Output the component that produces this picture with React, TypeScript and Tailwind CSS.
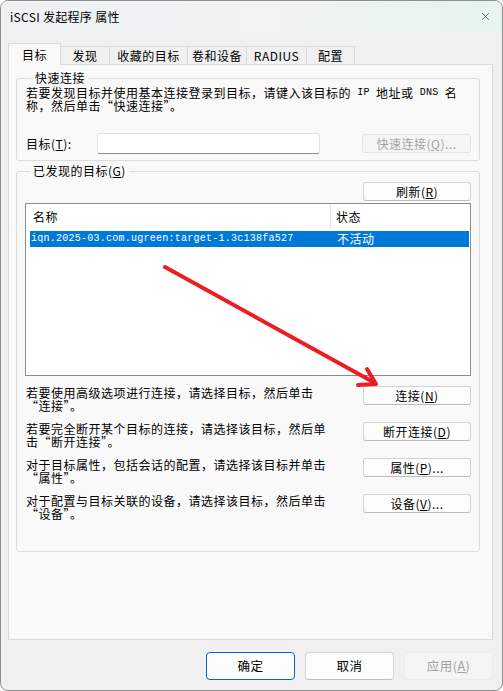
import React from 'react';
import { X } from 'lucide-react';

const mono = "font-['Liberation_Mono',monospace]";

const tabs = [
  { label: '发现', w: 'w-[49px]' },
  { label: '收藏的目标', w: 'w-[78px]' },
  { label: '卷和设备', w: 'w-[59px]' },
  { label: 'RADIUS', w: 'w-[60px]' },
  { label: '配置', w: 'w-[48px]' },
];

const Btn: React.FC<{ children: React.ReactNode; disabled?: boolean }> = ({ children, disabled }) => (
  <div
    className={
      disabled
        ? 'w-[109px] h-[19px] shrink-0 flex items-center justify-center rounded-[3px] border border-[#e4e4e4] bg-[#f5f5f5] text-[#a3a3a3] leading-none'
        : 'w-[108px] h-[19px] shrink-0 flex items-center justify-center rounded-[3px] border border-[#d3d3d3] border-b-[#bdbdbd] bg-[#fdfdfd] text-black leading-none'
    }
  >
    {children}
  </div>
);

const actions = [
  { l1: '若要使用高级选项进行连接，请选择目标，然后单击', l2: '“连接”。', btn: <>连接(<u>N</u>)</> },
  { l1: '若要完全断开某个目标的连接，请选择该目标，然后单', l2: '击“断开连接”。', btn: <>断开连接(<u>D</u>)</> },
  { l1: '对于目标属性，包括会话的配置，请选择该目标并单击', l2: '“属性”。', btn: <>属性(<u>P</u>)...</> },
  { l1: '对于配置与目标关联的设备，请选择该目标，然后单击', l2: '“设备”。', btn: <>设备(<u>V</u>)...</> },
];

const App: React.FC = () => {
  return (
    <div className="relative w-[503px] h-[691px] overflow-hidden rounded-[8px] border border-[#8f8f8f] bg-[#f0f0f0] font-['Noto_Sans_CJK_SC',sans-serif] text-[12px] tracking-[0.5px] text-black">
      {/* title bar */}
      <div className="h-[31px] flex items-center justify-between pl-[9px] pr-[10px] bg-linear-to-r from-[#eff1f3] via-[#f1f4f3] to-[#e6f3ee]">
        <span className="tracking-[0.3px]">iSCSI 发起程序 属性</span>
        <X size={13} strokeWidth={1.1} className="text-[#222]" />
      </div>

      <div className="pt-[11px] pl-[7px] pr-[9px]">
        {/* tabs */}
        <div className="flex items-end">
          <div className="relative z-10 -mb-px h-[22px] w-[53px] flex items-center justify-center border border-b-0 border-[#d9d9d9] bg-[#f9f9f9]">
            目标
          </div>
          {tabs.map((t) => (
            <div
              key={t.label}
              className={`${t.w} h-[18px] flex items-center justify-center border-t border-r border-[#d9d9d9] bg-[#f0f0f0]`}
            >
              {t.label}
            </div>
          ))}
        </div>

        {/* panel */}
        <div className="h-[576px] border border-[#d9d9d9] bg-[#f9f9f9] pt-[6px] flex flex-col">
          <fieldset className="ml-[7px] mr-[12px] rounded-[3px] border border-[#dcdcdc] pl-[9px] pr-[8px] pb-[6px]">
            <legend className="ml-[6px] px-[3px] h-[14px] leading-[14px]">快速连接</legend>
            <div className="pt-[1px] whitespace-nowrap">
              <div className="h-[13px] leading-[13px] flex items-center">
                若要发现目标并使用基本连接登录到目标，请键入该目标的
                <span className={`${mono} text-[10px] tracking-[0.25px] whitespace-pre`}> IP </span>
                地址或
                <span className={`${mono} text-[10px] tracking-[0.25px] whitespace-pre`}> DNS </span>名
              </div>
              <div className="h-[13px] leading-[13px]">称，然后单击“快速连接”。</div>
            </div>
            <div className="mt-[21px] flex items-center">
              <span className="w-[71px]">
                目标(<u>T</u>):
              </span>
              <div className="w-[223px] h-[21px] rounded-[3px] border border-[#e3e3e3] border-b-[#8a8a8a] bg-white" />
              <div className="ml-auto">
                <Btn disabled>
                  快速连接(<u>Q</u>)...
                </Btn>
              </div>
            </div>
          </fieldset>

          <fieldset className="mt-[3px] ml-[7px] mr-[12px] rounded-[3px] border border-[#dcdcdc] px-[8px] pb-[31px]">
            <legend className="ml-[5px] px-[3px] h-[14px] leading-[14px]">
              已发现的目标(<u>G</u>)
            </legend>
            <div className="mt-[4px] flex justify-end">
              <Btn>
                刷新(<u>R</u>)
              </Btn>
            </div>

            {/* list view */}
            <div className="mt-[2px] h-[173px] border border-[#8c8c8c] bg-white">
              <div className="h-[25px] flex">
                <div className="w-[305px] pl-[7px] flex items-center border-r border-[#e5e5e5]">名称</div>
                <div className="pl-[5px] flex items-center">状态</div>
              </div>
              <div className="mt-[2px] ml-[4px] mr-[1px] h-[16px] flex items-center bg-[#0078d7] text-white leading-none">
                <div className={`w-[307px] pl-[1px] ${mono} text-[10px] tracking-[0.25px]`}>
                  iqn.2025-03.com.ugreen:target-1.3c138fa527
                </div>
                <div>不活动</div>
              </div>
            </div>

            <div className="mt-[10px] flex flex-col gap-[10px]">
              {actions.map((a, i) => (
                <div key={i} className="flex items-start">
                  <div className="flex-1 pl-[1px] whitespace-nowrap">
                    <div className="h-[13px] leading-[13px]">{a.l1}</div>
                    <div className="h-[13px] leading-[13px]">{a.l2}</div>
                  </div>
                  <Btn>{a.btn}</Btn>
                </div>
              ))}
            </div>
          </fieldset>
        </div>

        {/* dialog buttons */}
        <div className="mt-[12px] flex justify-end gap-[10px] text-[12.5px]">
          <div className="w-[89px] h-[28px] flex items-center justify-center rounded-[4px] border border-[#0067c0] bg-[#fdfdfd]">
            确定
          </div>
          <div className="w-[89px] h-[28px] flex items-center justify-center rounded-[4px] border border-[#d5d5d5] border-b-[#c2c2c2] bg-[#fdfdfd]">
            取消
          </div>
          <div className="w-[89px] h-[28px] flex items-center justify-center rounded-[4px] border border-[#ececec] bg-[#f5f5f5] text-[#a0a0a0]">
            应用(<u>A</u>)
          </div>
        </div>
      </div>

      {/* red annotation arrow */}
      <svg className="absolute inset-0 pointer-events-none" width={503} height={691} viewBox="0 0 503 691">
        <g stroke="#ee1c24" strokeWidth={4} strokeLinecap="round" strokeLinejoin="round" fill="none">
          <line x1={164} y1={266} x2={374} y2={382} />
          <polyline points="366,368 375,383 357,384" />
        </g>
      </svg>
    </div>
  );
};

export default App;
